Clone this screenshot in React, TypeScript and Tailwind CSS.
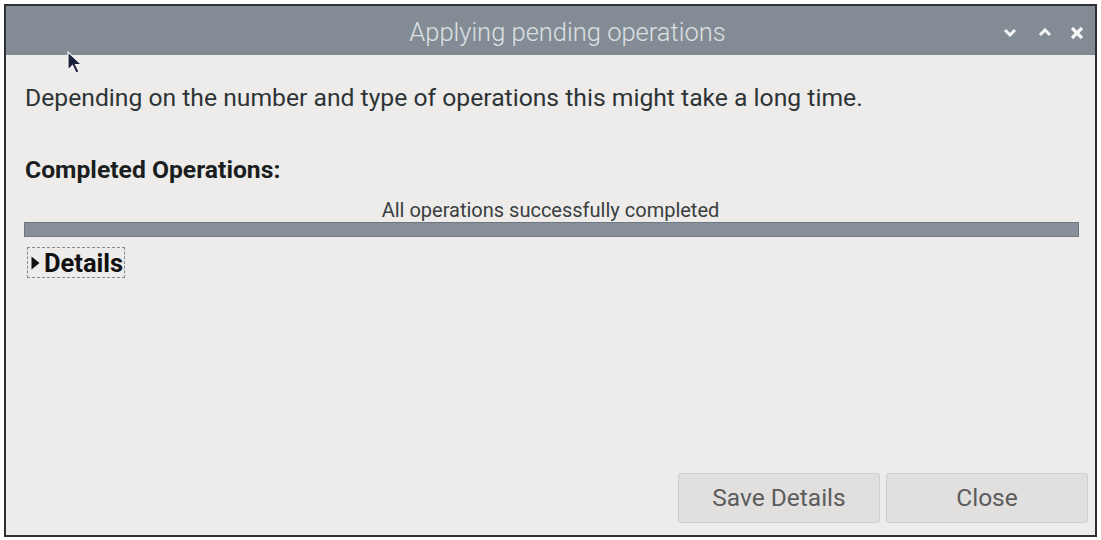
import React from 'react'

export default function App() {
    return (
        <div className="w-[1101px] h-[540px] bg-white relative" style={{ fontFamily: 'Roboto, "Liberation Sans", sans-serif' }}>
            <div className="absolute left-[4px] top-[4px] w-[1093px] h-[533px] border-2 border-[#2f2f2f] bg-[#edecea] flex flex-col">
                {renderTitleBar()}
                {renderBody()}
            </div>
            {renderCursor()}
        </div>
    )

    function renderTitleBar() {
        return (
            <div className="h-[49px] bg-[#838c95] flex items-center relative shrink-0">
                <div className="flex-1 text-center text-[25.5px] font-light text-[#dde0e3] pl-[34px] pt-[4px]">Applying pending operations</div>
                <div className="absolute right-[11px] top-[2px] h-full flex items-center text-white">
                    <svg width="14" height="9" viewBox="0 0 14 9"><path d="M2 2 L7 7 L12 2" stroke="#f4f5f6" strokeWidth="3" fill="none" /></svg>
                    <svg className="ml-[21px]" width="14" height="9" viewBox="0 0 14 9"><path d="M2 7 L7 2 L12 7" stroke="#f4f5f6" strokeWidth="3" fill="none" /></svg>
                    <svg className="ml-[18px]" width="14" height="14" viewBox="0 0 14 14"><path d="M2 2 L12 12 M12 2 L2 12" stroke="#f4f5f6" strokeWidth="3.2" fill="none" /></svg>
                </div>
            </div>
        )
    }

    function renderBody() {
        return (
            <div className="flex-1 flex flex-col px-[18px] pb-[12px]">
                <div className="mt-[28px] pl-[1px] text-[24.7px] text-[#2e3436] leading-[30px]">Depending on the number and type of operations this might take a long time.</div>
                <div className="mt-[42px] pl-[1px] text-[24.7px] font-bold text-[#1b1e20] leading-[30px]">Completed Operations:</div>
                <div className="mt-[14px] text-center text-[20px] text-[#3a3e40] leading-[22px]">All operations successfully completed</div>
                <div className="mt-[1px] h-[15px] bg-[#87909a] border border-[#6e767e] mr-[-2px]" />
                {renderDetails()}
                <div className="flex-1" />
                {renderButtons()}
            </div>
        )
    }

    function renderDetails() {
        return (
            <div className="mt-[10px] ml-[3px] self-start flex items-center gap-[4px] border border-dashed border-[#8a8a8a] pl-[3px] pr-[1px] h-[31px]">
                <svg width="9" height="14" viewBox="0 0 9 14"><path d="M0.5 0.5 L8.5 7 L0.5 13.5 Z" fill="#111" /></svg>
                <span className="text-[25.5px] font-bold text-[#111] leading-[28px]">Details</span>
            </div>
        )
    }

    function renderButtons() {
        return (
            <div className="flex justify-end gap-[6px] mr-[-11px]">
                <button className="w-[202px] h-[50px] bg-[#e1e0df] border border-[#cfcecd] rounded-[3px] text-[24.5px] text-[#5c5c5c]">Save Details</button>
                <button className="w-[202px] h-[50px] bg-[#e1e0df] border border-[#cfcecd] rounded-[3px] text-[24.5px] text-[#5c5c5c]">Close</button>
            </div>
        )
    }

    function renderCursor() {
        return (
            <svg className="absolute left-[66px] top-[50px]" width="18" height="26" viewBox="0 0 18 26">
                <path d="M2 2 L2 20 L6.5 15.5 L10 23 L13 21.5 L9.5 14.5 L15.5 14.5 Z" fill="#1a1f3a" stroke="#f2f2f2" strokeWidth="1.2" />
            </svg>
        )
    }
}
